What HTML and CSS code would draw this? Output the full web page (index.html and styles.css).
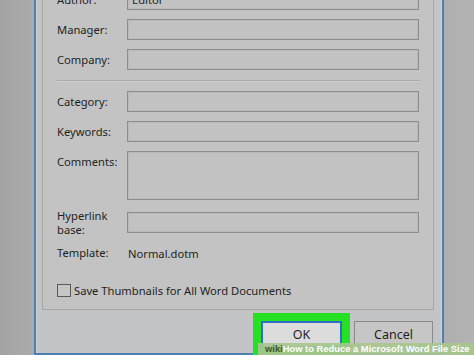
FILE: index.html
```html
<!DOCTYPE html>
<html>
<head>
<meta charset="utf-8">
<link rel="stylesheet" href="styles.css">
</head>
<body>
<div class="frame">
  <div class="panel">
    <div class="row"><span class="lbl">Author:</span><div class="field">Editor</div></div>
    <div class="row"><span class="lbl">Manager:</span><div class="field"></div></div>
    <div class="row"><span class="lbl">Company:</span><div class="field"></div></div>
    <div class="sep"></div>
    <div class="row"><span class="lbl">Category:</span><div class="field"></div></div>
    <div class="row"><span class="lbl">Keywords:</span><div class="field"></div></div>
    <div class="row top"><span class="lbl lbl-top">Comments:</span><div class="field area"></div></div>
    <div class="row link"><span class="lbl">Hyperlink<br>base:</span><div class="field"></div></div>
    <div class="row tmpl"><span class="lbl">Template:</span><span class="val">Normal.dotm</span></div>
    <div class="check"><span class="box"></span><span>Save Thumbnails for All Word Documents</span></div>
  </div>
  <div class="buttons">
    <div class="btn ok">OK</div>
    <div class="btn">Cancel</div>
  </div>
</div>
<div class="banner"><span class="wiki">wiki</span>How to Reduce a Microsoft Word File Size</div>
</body>
</html>
```
FILE: styles.css
```css
html, body {
  margin: 0;
  padding: 0;
}
body {
  width: 474px;
  height: 355px;
  overflow: hidden;
  position: relative;
  background: linear-gradient(90deg, #a3a3a3 0%, #acacac 8%, #acacac 90%, #b3b3b3 100%);
  font-family: "Noto Sans", "Open Sans", sans-serif;
  font-size: 11.2px;
  color: #1f1f1f;
}
.frame {
  box-sizing: border-box;
  width: 410px;
  margin: -30px 0 0 34px;
  border: 2px solid #4e7fb2;
  background: #c3c4c6;
  padding: 0 8px 5px 6px;
  box-shadow: inset 1px 0 0 #d3cdcd, inset -1px 0 0 #cfd2d6;
}
.panel {
  border: 1px solid #a6a6a6;
  background: #c3c3c3;
  padding: 16px 13px 12px 14px;
  display: flex;
  flex-direction: column;
}
.row {
  display: flex;
  align-items: center;
  margin-bottom: 9px;
}
.row.top {
  align-items: flex-start;
  margin-bottom: 12px;
}
.lbl {
  width: 70px;
  flex: none;
  line-height: 14px;
}
.lbl-top {
  padding-top: 4px;
}
.field {
  box-sizing: border-box;
  width: 292px;
  height: 21px;
  border: 1px solid #8d8d8d;
  box-shadow: inset 0 0 0 1px #b9b9b9;
  background: #c2c2c2;
  padding-left: 4px;
  line-height: 19px;
}
.field.area {
  height: 49px;
}
.sep {
  height: 1px;
  background: #a9a9a9;
  border-bottom: 1px solid #cfcfcf;
  margin: 1px 0 9px 0;
}
.row.link {
  height: 21px;
  margin-bottom: 11px;
}
.row.tmpl {
  height: 18px;
  margin-bottom: 21px;
}
.val {
  padding-left: 1px;
}
.check {
  display: flex;
  align-items: center;
  height: 14px;
}
.box {
  box-sizing: border-box;
  width: 14px;
  height: 13px;
  border: 1px solid #5a5a5a;
  background: #c6c6c6;
  margin-right: 3px;
}
.buttons {
  display: flex;
  justify-content: flex-end;
  gap: 12px;
  margin-top: 11px;
  padding-right: 1px;
}
.btn {
  box-sizing: border-box;
  width: 79px;
  height: 27px;
  border: 1px solid #8a8a8a;
  background: #c6c6c6;
  display: flex;
  align-items: center;
  justify-content: center;
  font-size: 12.5px;
}
.btn.ok {
  width: 81px;
  border: 2px solid #2f6fc4;
  background: #dcdcdc;
  box-shadow: 0 0 0 8px #25e025;
}
.banner {
  position: absolute;
  right: 0;
  bottom: 0;
  width: 216px;
  height: 12px;
  background: rgba(168, 196, 142, 0.92);
  color: #ffffff;
  font-family: "Liberation Sans", sans-serif;
  font-weight: bold;
  font-size: 9.4px;
  line-height: 12px;
  padding-left: 7px;
  box-sizing: border-box;
  white-space: nowrap;
  overflow: hidden;
}
.wiki {
  color: #3b5a2a;
}
```
